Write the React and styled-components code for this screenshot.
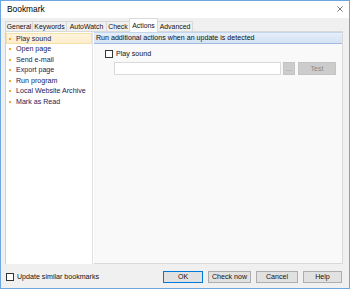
import styled, { createGlobalStyle } from "styled-components";

const GlobalStyle = createGlobalStyle`
  html, body {
    margin: 0;
    padding: 0;
    background: #fff;
  }
  body {
    font-family: "Liberation Sans", Arial, sans-serif;
  }
`;

const tabs = [
  { label: "General", width: 28 },
  { label: "Keywords", width: 35 },
  { label: "AutoWatch", width: 41 },
  { label: "Check", width: 24 },
  { label: "Actions", width: 29, active: true },
  { label: "Advanced", width: 36 },
];

const actions = [
  "Play sound",
  "Open page",
  "Send e-mail",
  "Export page",
  "Run program",
  "Local Website Archive",
  "Mark as Read",
];

const App = () => {
  return (
    <>
      <GlobalStyle />
      <Window>
        <TitleBar>
          <Title>Bookmark</Title>
          <CloseIcon viewBox="0 0 8 8">
            <path d="M0.5 0.5 L7.5 7.5 M7.5 0.5 L0.5 7.5" stroke="#222" strokeWidth="0.8" />
          </CloseIcon>
        </TitleBar>
        <Body>
          <TabRow>
            {tabs.map((t) => (
              <Tab key={t.label} $w={t.width} $active={t.active}>
                {t.label}
              </Tab>
            ))}
          </TabRow>
          <TabPage>
            <ActionList>
              {actions.map((a, i) => (
                <ActionItem key={a} $selected={i === 0}>
                  <Bullet />
                  {a}
                </ActionItem>
              ))}
            </ActionList>
            <DetailPanel>
              <PanelHeader>Run additional actions when an update is detected</PanelHeader>
              <CheckRow>
                <CheckBox />
                <span>Play sound</span>
              </CheckRow>
              <FileRow>
                <TextField />
                <SmallButton $w={12}>...</SmallButton>
                <SmallButton $w={38}>Test</SmallButton>
              </FileRow>
            </DetailPanel>
          </TabPage>
          <Footer>
            <FooterCheck>
              <CheckBox />
              <span>Update similar bookmarks</span>
            </FooterCheck>
            <Buttons>
              <Button $w={40} $default>OK</Button>
              <Button $w={43}>Check now</Button>
              <Button $w={42}>Cancel</Button>
              <Button $w={39}>Help</Button>
            </Buttons>
          </Footer>
        </Body>
      </Window>
    </>
  );
};

export default App;

const Window = styled.div`
  width: 350px;
  height: 289px;
  box-sizing: border-box;
  border: 1px solid #6ea7df;
  display: flex;
  flex-direction: column;
  background: #f0f0f0;
  color: #111;
  font-size: 7.1px;
`;

const TitleBar = styled.div`
  height: 17px;
  background: #fff;
  display: flex;
  align-items: center;
  justify-content: space-between;
  padding: 0 6px 0 6px;
`;

const Title = styled.span`
  font-size: 8.4px;
  color: #000;
  margin-top: -1px;
`;

const CloseIcon = styled.svg`
  width: 6px;
  height: 6px;
  margin-top: -2px;
`;

const Body = styled.div`
  flex: 1;
  display: flex;
  flex-direction: column;
  padding: 0 6px 0 4px;
`;

const TabRow = styled.div`
  height: 14px;
  display: flex;
  align-items: flex-end;
`;

const Tab = styled.div`
  box-sizing: border-box;
  width: ${(p) => p.$w}px;
  height: ${(p) => (p.$active ? 14 : 11)}px;
  border: 1px solid #d9d9d9;
  border-bottom: ${(p) => (p.$active ? "none" : "1px solid #d9d9d9")};
  margin-left: -1px;
  background: ${(p) => (p.$active ? "#fff" : "#f0f0f0")};
  display: flex;
  align-items: center;
  justify-content: center;
  white-space: nowrap;
  font-size: 6.9px;
  position: relative;
  z-index: ${(p) => (p.$active ? 1 : 0)};
  &:first-child {
    margin-left: 0;
  }
`;

const TabPage = styled.div`
  height: 232px;
  display: flex;
  background: #fff;
  border-top: 1px solid #d9d9d9;
  margin-top: -1px;
`;

const ActionList = styled.div`
  width: 88px;
  box-sizing: border-box;
  border-left: 1px solid #d0d0d0;
  border-right: 1px solid #e3e3e3;
  background: #fff;
  padding-top: 1px;
`;

const ActionItem = styled.div`
  height: ${(p) => (p.$selected ? 11.2 : 10.5)}px;
  box-sizing: border-box;
  display: flex;
  align-items: center;
  padding-left: 1px;
  color: #22225a;
  white-space: nowrap;
  background: ${(p) => (p.$selected ? "linear-gradient(#fef4dc, #fdeecb)" : "transparent")};
  border: 1px solid ${(p) => (p.$selected ? "#f6e0ac" : "transparent")};
`;

const Bullet = styled.span`
  width: 2px;
  height: 2px;
  background: #f0a83c;
  margin: 0 5px 0 1px;
  flex-shrink: 0;
`;

const DetailPanel = styled.div`
  flex: 1;
  margin-left: 1px;
  background: #f9f9f9;
  border-right: 1px solid #d9d9d9;
  border-bottom: 1px solid #d9d9d9;
  display: flex;
  flex-direction: column;
`;

const PanelHeader = styled.div`
  height: 12px;
  box-sizing: border-box;
  background: linear-gradient(#e6effa, #d3e2f4);
  border-top: 1px solid #c4d6ee;
  border-bottom: 1px solid #9fbbe0;
  display: flex;
  align-items: center;
  padding-left: 2px;
  white-space: nowrap;
`;

const CheckRow = styled.div`
  display: flex;
  align-items: center;
  gap: 3px;
  margin: 5px 0 0 11px;
  height: 9px;
`;

const CheckBox = styled.span`
  width: 8px;
  height: 8px;
  box-sizing: border-box;
  border: 1px solid #333;
  background: #fff;
  flex-shrink: 0;
`;

const FileRow = styled.div`
  display: flex;
  margin: 4px 0 0 20px;
  height: 13px;
`;

const TextField = styled.div`
  width: 167px;
  box-sizing: border-box;
  border: 1px solid #dadada;
  background: #fff;
`;

const SmallButton = styled.div`
  width: ${(p) => p.$w}px;
  margin-left: ${(p) => (p.$w > 20 ? 3 : 2)}px;
  box-sizing: border-box;
  background: #cccccc;
  border: 1px solid #c4c4c4;
  color: #8a8a8a;
  display: flex;
  align-items: center;
  justify-content: center;
`;

const Footer = styled.div`
  flex: 1;
  display: flex;
  align-items: center;
  justify-content: space-between;
  padding-top: 2px;
`;

const FooterCheck = styled.div`
  display: flex;
  align-items: center;
  gap: 3px;
  margin-left: 1px;
`;

const Buttons = styled.div`
  display: flex;
  gap: 5px;
  margin-right: 1px;
`;

const Button = styled.div`
  width: ${(p) => p.$w}px;
  height: 12px;
  box-sizing: border-box;
  border: 1px solid ${(p) => (p.$default ? "#0078d7" : "#adadad")};
  background: #e1e1e1;
  display: flex;
  align-items: center;
  justify-content: center;
  white-space: nowrap;
`;
